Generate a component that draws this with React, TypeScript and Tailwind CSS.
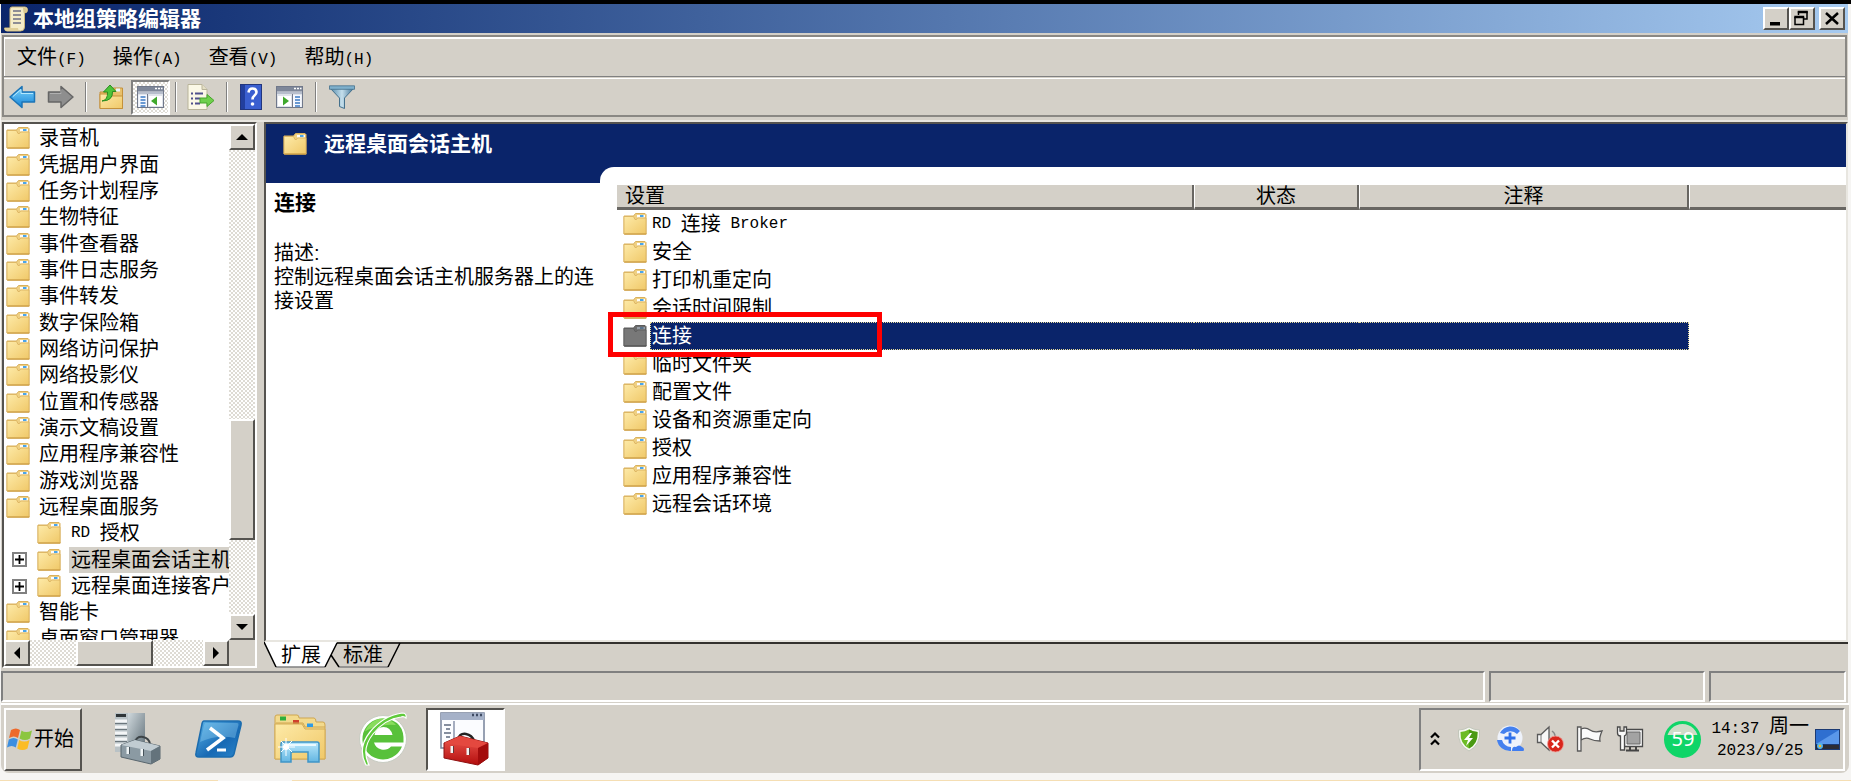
import React from "react";

interface ITreeItem {
  label: string;
  child?: boolean;
  expandable?: boolean;
  selected?: boolean;
}

const treeItems: ITreeItem[] = [
  { label: "录音机" },
  { label: "凭据用户界面" },
  { label: "任务计划程序" },
  { label: "生物特征" },
  { label: "事件查看器" },
  { label: "事件日志服务" },
  { label: "事件转发" },
  { label: "数字保险箱" },
  { label: "网络访问保护" },
  { label: "网络投影仪" },
  { label: "位置和传感器" },
  { label: "演示文稿设置" },
  { label: "应用程序兼容性" },
  { label: "游戏浏览器" },
  { label: "远程桌面服务" },
  { label: "RD 授权", child: true },
  { label: "远程桌面会话主机", child: true, expandable: true, selected: true },
  { label: "远程桌面连接客户", child: true, expandable: true },
  { label: "智能卡" },
  { label: "桌面窗口管理器" },
];

const settings = [
  "RD 连接 Broker",
  "安全",
  "打印机重定向",
  "会话时间限制",
  "连接",
  "临时文件夹",
  "配置文件",
  "设备和资源重定向",
  "授权",
  "应用程序兼容性",
  "远程会话环境",
];

const raised =
  "border-2 border-t-white border-l-white border-r-[#55534f] border-b-[#55534f] bg-[#d4d0c8]";
const dither =
  "bg-[conic-gradient(#dedbd4_25%,#fff_0_50%,#dedbd4_0_75%,#fff_0)] bg-[length:4px_4px]";

// Latin runs are set in a half-width face next to the full-width characters
function MixedText({ children }: { children: string }) {
  return (
    <>
      {children.split(/([\x20-\x7e]+)/).map((part, i) =>
        i % 2 ? (
          <span
            key={i}
            className="font-['Liberation_Mono','Noto_Sans_CJK_SC',monospace] text-[16px] whitespace-pre"
          >
            {part}
          </span>
        ) : (
          part
        )
      )}
    </>
  );
}

function FolderIcon({ dark = false }: { dark?: boolean }) {
  const front = dark ? "#787878" : "url(#folderFront)";
  const edge = dark ? "#5c5c5c" : "#d9b05c";
  return (
    <svg width="24" height="22" viewBox="0 0 24 22" className="shrink-0" aria-hidden="true">
      <path d="M1 3h9.500l2-2.500h9.500l1 1V21H1z" fill={dark ? "#6c6c6c" : "#efd083"} stroke={edge} />
      <path d="M14 2h8v2.500h-8z" fill={dark ? "#98a0a8" : "#fdfdfd"} />
      <path d="M17 2h3.500v2H17z" fill={dark ? "#59738c" : "#4aa5ea"} />
      <path d="M1 3.500h9.500l1.500 3h1.500l1-1.500h8.500V21H1z" fill={front} stroke={edge} strokeWidth=".8" />
      <path d="M1.500 21h22" stroke={dark ? "#505050" : "#c9993f"} />
    </svg>
  );
}

function Defs() {
  return (
    <svg width="0" height="0" className="absolute" aria-hidden="true">
      <defs>
        <linearGradient id="folderFront" x1="0" y1="0" x2="1" y2="1">
          <stop offset="0" stopColor="#fdeaa8" />
          <stop offset="1" stopColor="#f0c868" />
        </linearGradient>
        <linearGradient id="blueArrow" x1="0" y1="0" x2="0" y2="1">
          <stop offset="0" stopColor="#7fd6fb" />
          <stop offset="1" stopColor="#1583d8" />
        </linearGradient>
        <linearGradient id="steel" x1="0" y1="0" x2="1" y2="1">
          <stop offset="0" stopColor="#cfd8dc" />
          <stop offset="1" stopColor="#5f6e77" />
        </linearGradient>
        <linearGradient id="psBlue" x1="0" y1="0" x2="1" y2="1">
          <stop offset="0" stopColor="#5cb4e8" />
          <stop offset=".6" stopColor="#1769b4" />
          <stop offset="1" stopColor="#2b86cc" />
        </linearGradient>
        <linearGradient id="funnel" x1="0" y1="0" x2="1" y2="0">
          <stop offset="0" stopColor="#4f86a8" />
          <stop offset=".5" stopColor="#c5dfec" />
          <stop offset="1" stopColor="#3d7195" />
        </linearGradient>
        <linearGradient id="glass" x1="0" y1="0" x2="0" y2="1">
          <stop offset="0" stopColor="#b9e8fb" />
          <stop offset="1" stopColor="#63b6e2" />
        </linearGradient>
        <linearGradient id="redBox" x1="0" y1="0" x2="0" y2="1">
          <stop offset="0" stopColor="#ee5a50" />
          <stop offset="1" stopColor="#b30d0d" />
        </linearGradient>
      </defs>
    </svg>
  );
}

function ScrollIcon() {
  return (
    <svg width="24" height="26" viewBox="0 0 24 26" aria-hidden="true">
      <path d="M6 3q0-2 2-2h13q2.500 0 2.500 3t-3 3v14q0 4-4 4H3q-2.500 0-2.500-3H6z" fill="#f4ecc8" stroke="#cbb67a" />
      <path d="M19 1.500q3.500 0 4 2.500t-3.500 3z" fill="#d8c78f" />
      <path d="M1 22h13q0 3 3 3H3q-2 0-2-3z" fill="#e0cf98" />
      <path d="M9 5h8M9 9h8M9 13h8M9 17h8" stroke="#8d8d95" strokeWidth="1.800" />
    </svg>
  );
}

function ArrowIcon({ left = false }: { left?: boolean }) {
  return (
    <svg width="27" height="24" viewBox="0 0 27 24" aria-hidden="true">
      <path
        d={left ? "M1 12 13 1.500V7h12.500v10H13v5.500z" : "M26 12 14 1.500V7H1.500v10H14v5.500z"}
        fill={left ? "url(#blueArrow)" : "#8e8e8e"}
        stroke={left ? "#1c74b6" : "#666"}
        strokeWidth="1.500"
        strokeLinejoin="round"
      />
      <path
        d={left ? "M4 11.500 12 4.500V8.500h12" : "M14 4.500v4H3"}
        fill="none"
        stroke={left ? "#b5e9ff" : "#b0b0b0"}
      />
    </svg>
  );
}

function FolderUpIcon() {
  return (
    <svg width="25" height="26" viewBox="0 0 25 26" aria-hidden="true">
      <path d="M1 8h10l3-4h9.500v20.500H1z" fill="#e8c06a" stroke="#c4913b" />
      <path d="M1 10h9l3 2h10.500v12.500H1z" fill="url(#folderFront)" stroke="#c4913b" />
      <path d="M17 4.500h4v3h-4z" fill="#e8f4fc" />
      <path d="M3 17q6-1 5.500-9H4.500L11 1l6 6.500h-3.500Q14 17 3 17z" fill="#4dc43a" stroke="#2b8c20" />
    </svg>
  );
}

function PanelIcon({ right = false }: { right?: boolean }) {
  return (
    <svg width="27" height="22" viewBox="0 0 27 22" aria-hidden="true">
      <rect x=".5" y=".5" width="26" height="21" fill="#dfe3ea" stroke="#70788a" />
      <path d="M1 1h25v4.500H1z" fill="#7e8799" />
      <path d="M18 2.500h2M21 2.500h2M24 2.500h1.500" stroke="#fff" strokeWidth="1.500" />
      <path d="M1 7h25" stroke="#aab2c2" strokeWidth="1.500" />
      <path d={right ? "M2 10h13v10H2z" : "M12 10h13v10H12z"} fill="#fff" />
      <path d={right ? "M17 9h8.500v12H17z" : "M1.500 9H10v12H1.500z"} fill="#f5f8ff" />
      <path
        d={right ? "M19 11h5M19 14h5M19 17h5M19 20h5" : "M3.500 11h5M3.500 14h5M3.500 17h5M3.500 20h5"}
        stroke="#3b7ac4"
        strokeWidth="1.600"
      />
      <path d={right ? "M16.500 8v13" : "M10.500 8v13"} stroke="#70788a" />
      <path d={right ? "M7 10.500v9l6-4.500z" : "M20 10.500v9L14 15z"} fill="#3fa82c" />
    </svg>
  );
}

function ExportIcon() {
  return (
    <svg width="28" height="26" viewBox="0 0 28 26" aria-hidden="true">
      <path d="M1 .5h14l5 5v20H1z" fill="#fbf8e6" stroke="#b9b49a" />
      <path d="M15 .5v5h5" fill="#e4dfc4" stroke="#b9b49a" />
      <path d="M4 9.500h2M8 9.500h8M4 14.500h2M8 14.500h5M4 19.500h2M8 19.500h5" stroke="#50508c" strokeWidth="1.800" />
      <path d="M13 14h7v-3.500l7 6-7 6V19h-7z" fill="#6fd04c" stroke="#48a52c" />
    </svg>
  );
}

function HelpIcon() {
  return (
    <svg width="22" height="26" viewBox="0 0 22 26" aria-hidden="true">
      <rect x=".5" y=".5" width="21" height="25" fill="#3a5fd0" stroke="#22367e" />
      <path d="M1 1h4v24H1z" fill="#223f9e" />
      <path
        d="M8.500 8.500q.5-4 4-4t4 3.500q0 2-2 3.500t-2 4"
        fill="none"
        stroke="#fff"
        strokeWidth="2.600"
      />
      <circle cx="12.500" cy="20" r="1.800" fill="#fff" />
    </svg>
  );
}

function FilterIcon() {
  return (
    <svg width="26" height="24" viewBox="0 0 26 24" aria-hidden="true">
      <path d="M1 3 10.500 13v8.500l5 2V13L25 3z" fill="url(#funnel)" stroke="#44708c" />
      <path d="M.5.800h25v3.500H.5z" fill="#7fb0cc" stroke="#44708c" strokeWidth=".8" />
    </svg>
  );
}

function ScrollButton({ label, points }: { label: string; points: string }) {
  return (
    <button aria-label={label} className={`flex size-[26px] shrink-0 items-center justify-center ${raised}`}>
      <svg width="12" height="12" viewBox="0 0 12 12" aria-hidden="true">
        <polygon points={points} fill="#000" />
      </svg>
    </button>
  );
}

function TitleBar() {
  return (
    <div className="flex h-[29px] shrink-0 items-center bg-linear-to-r from-[#0a246a] to-[#a6caf0] pr-[3px] pl-[3px]">
      <ScrollIcon />
      <h1 className="ml-[5px] flex-1 text-[21px] leading-none font-bold text-white">本地组策略编辑器</h1>
      <button aria-label="最小化" className={`h-[23px] w-[26px] ${raised}`}>
        <svg width="22" height="19" viewBox="0 0 22 19" aria-hidden="true">
          <path d="M5 13h10v3.500H5z" />
        </svg>
      </button>
      <button aria-label="还原" className={`h-[23px] w-[26px] ${raised}`}>
        <svg width="22" height="19" viewBox="0 0 22 19" fill="none" stroke="#000" aria-hidden="true">
          <path d="M7.500 6V3h8.500v7h-3" strokeWidth="1.500" />
          <path d="M6.800 3h9.900M3.300 8h9.900" strokeWidth="2.600" />
          <path d="M4 8v7.500h8.500V8" strokeWidth="1.500" />
        </svg>
      </button>
      <button aria-label="关闭" className={`ml-1 h-[23px] w-[26px] ${raised}`}>
        <svg width="22" height="19" viewBox="0 0 22 19" aria-hidden="true">
          <path d="m5 4 12 11M17 4 5 15" stroke="#000" strokeWidth="2.500" />
        </svg>
      </button>
    </div>
  );
}

function Separator() {
  return <span className="h-[30px] w-[2px] border-r border-l border-r-white border-l-[#808080]" />;
}

function MenuAndToolbar() {
  return (
    <div className="mt-[2px] mr-[1px] ml-[1px] shrink-0 border-2 border-[#8a8884]">
      <nav className="flex h-[39px] items-center gap-[27px] border-t-2 border-l border-white pl-[12px]">
        {["文件(F)", "操作(A)", "查看(V)", "帮助(H)"].map((m) => (
          <button key={m} className="leading-none">
            <MixedText>{m}</MixedText>
          </button>
        ))}
      </nav>
      <div className="h-[3px] border-t border-b border-t-[#808080] border-b-white" />
      <div className="flex h-[36px] items-center pl-[5px]">
        <button aria-label="后退">
          <ArrowIcon left />
        </button>
        <button aria-label="前进" className="mr-[11px] ml-[11px]">
          <ArrowIcon />
        </button>
        <Separator />
        <button aria-label="向上一级" className="mr-[7px] ml-[12px]">
          <FolderUpIcon />
        </button>
        <button
          aria-label="显示控制台树"
          aria-pressed="true"
          className={`mr-[5px] flex h-[35px] w-[39px] items-center justify-center border-2 border-t-[#808080] border-r-white border-b-white border-l-[#808080] ${dither}`}
        >
          <PanelIcon />
        </button>
        <Separator />
        <button aria-label="导出列表" className="mr-[11px] ml-[10px]">
          <ExportIcon />
        </button>
        <Separator />
        <button aria-label="帮助" className="ml-[12px]">
          <HelpIcon />
        </button>
        <button aria-label="显示操作窗格" className="mr-[12px] ml-[14px]">
          <PanelIcon right />
        </button>
        <Separator />
        <button aria-label="筛选" className="ml-[12px]">
          <FilterIcon />
        </button>
      </div>
    </div>
  );
}

function TreePane() {
  return (
    <aside className="flex w-[255px] shrink-0 flex-col border-2 border-t-[#55534f] border-r-white border-b-white border-l-[#55534f]">
      <div className="flex min-h-0 flex-1">
        <div className="min-w-0 flex-1 overflow-hidden bg-white pt-[1px]">
          <ul className="flex h-[527px] flex-col">
            {treeItems.map((item) => (
              <li
                key={item.label}
                className={`flex min-h-0 flex-1 items-center whitespace-nowrap ${item.child ? "pl-[8px]" : "pl-[2px]"}`}
              >
                {item.child &&
                  (item.expandable ? (
                    <button
                      aria-label="展开"
                      className="mr-[10px] flex size-[15px] shrink-0 items-center justify-center border-2 border-[#808080] bg-white"
                    >
                      <svg width="9" height="9" viewBox="0 0 9 9" aria-hidden="true">
                        <path d="M0 4.500h9M4.500 0v9" stroke="#000" strokeWidth="1.800" />
                      </svg>
                    </button>
                  ) : (
                    <span className="mr-[10px] w-[15px] shrink-0" />
                  ))}
                <FolderIcon />
                <span
                  className={`flex h-full items-center ${
                    item.child ? "ml-[8px] flex-1 pl-[2px]" : "ml-[9px]"
                  } ${item.selected ? "bg-[#d4d0c8]" : ""}`}
                >
                  <MixedText>{item.label}</MixedText>
                </span>
              </li>
            ))}
          </ul>
        </div>
        <div className={`flex w-[26px] shrink-0 flex-col ${dither}`}>
          <ScrollButton label="向上滚动" points="0,9 12,9 6,3" />
          <div className="flex-[270]" />
          <div className={`flex-[117] ${raised}`} />
          <div className="flex-[74]" />
          <ScrollButton label="向下滚动" points="0,3 12,3 6,9" />
        </div>
      </div>
      <div className="flex h-[26px] shrink-0 pr-[26px]">
        <div className={`flex flex-1 ${dither}`}>
          <ScrollButton label="向左滚动" points="9,0 9,12 3,6" />
          <div className="flex-[46]" />
          <div className={`flex-[74] ${raised}`} />
          <div className="flex-[50]" />
          <ScrollButton label="向右滚动" points="3,0 3,12 9,6" />
        </div>
      </div>
    </aside>
  );
}

function SettingsTable() {
  const head =
    "h-[25px] border-b-[3px] border-[#686662] bg-[#d4d0c8] p-0 text-center leading-none font-normal";
  const split = "border-r-2 border-r-[#686662]";
  return (
    <table className="w-full table-fixed border-separate border-spacing-0">
      <colgroup>
        <col className="w-[577px]" />
        <col className="w-[165px]" />
        <col className="w-[330px]" />
        <col />
      </colgroup>
      <thead>
        <tr>
          <th className={`${head} ${split} pl-2 text-left`}>设置</th>
          <th className={`${head} ${split} border-l border-l-white`}>状态</th>
          <th className={`${head} ${split} border-l border-l-white`}>注释</th>
          <th className={`${head} border-l border-l-white`} aria-label="其他" />
        </tr>
      </thead>
      <tbody>
        {settings.map((name) => {
          const selected = name === "连接";
          const mark = selected
            ? "border-y border-dotted border-[#e8dc9a] bg-[#0a246a] text-white"
            : "";
          return (
            <tr key={name} className="h-7">
              <td className="relative p-0">
                <div className="flex h-7 items-center pl-[6px]">
                  <FolderIcon dark={selected} />
                  <span
                    className={`ml-[3px] flex h-full flex-1 items-center ${mark} ${selected ? "border-l pl-[1px]" : "pl-[2px]"}`}
                  >
                    <MixedText>{name}</MixedText>
                  </span>
                </div>
                {selected && (
                  <div className="absolute -top-[10px] -left-[9px] z-10 h-[45px] w-[274px] border-[5px] border-[#ff0000]" />
                )}
              </td>
              <td className={`p-0 ${mark}`} />
              <td className={`p-0 ${mark} ${selected ? "border-r" : ""}`} />
              <td className="p-0" />
            </tr>
          );
        })}
      </tbody>
    </table>
  );
}

function DetailPane() {
  return (
    <main className="flex min-w-0 flex-1 flex-col">
      <div className="flex min-h-0 flex-1 flex-col border-2 border-t-[#55534f] border-r-[#e8e6e0] border-b-[#e8e6e0] border-l-[#55534f] bg-white">
        <div className="flex h-[59px] shrink-0 items-start bg-[#0a246a] pt-[9px] pl-[17px]">
          <div className="flex items-center gap-[17px]">
            <FolderIcon />
            <h2 className="text-[21px] leading-[22px] font-bold text-white">远程桌面会话主机</h2>
          </div>
        </div>
        <div className="flex min-h-0 flex-1">
          <section className="w-[334px] shrink-0 pt-[8px] pl-[8px]">
            <h3 className="text-[21px] leading-6 font-bold">连接</h3>
            <p className="mt-[26px] leading-6">描述:</p>
            <p className="leading-6">控制远程桌面会话主机服务器上的连接设置</p>
          </section>
          <section className="-mt-4 min-w-0 flex-1 rounded-tl-[14px] bg-white pt-[18px] pl-[17px]">
            <SettingsTable />
          </section>
        </div>
      </div>
      <div className="relative flex h-[26px] shrink-0 items-center">
        <div className="absolute top-0 right-0 left-[72px] h-[2px] bg-[#33312e]" />
        <svg width="140" height="26" viewBox="0 0 140 26" className="absolute top-0 left-0" aria-hidden="true">
          <path d="M0 0h73L61 25H12z" fill="#fff" />
          <path d="M12 25h49M75 25h49" stroke="#808080" strokeWidth="1.500" />
          <path d="M0 0 12 25M61 25 73 1M67 13l8 12M124 25 136 1" fill="none" stroke="#000" strokeWidth="1.500" />
        </svg>
        <button className="relative ml-[17px] leading-none">扩展</button>
        <button className="relative ml-[22px] leading-none">标准</button>
      </div>
    </main>
  );
}

function StatusBar() {
  const cell = "border-2 border-t-[#808080] border-l-[#808080] border-r-white border-b-white";
  return (
    <footer className="mt-[3px] mb-[1px] flex h-[31px] shrink-0 gap-1 pr-[2px]">
      <div className={`flex-1 ${cell}`} />
      <div className={`w-[216px] ${cell}`} />
      <div className={`w-[137px] ${cell}`} />
    </footer>
  );
}

function WindowsFlag() {
  return (
    <svg width="26" height="24" viewBox="0 0 26 24" aria-hidden="true">
      <path d="M4 3q5-3 9 0l-2 8q-4-3-9 0z" fill="#ee6a2c" />
      <path d="M14.500 3.500q4 3 10.500 0l-2 8q-5 3-10.500 0z" fill="#8cc63f" />
      <path d="M1.800 12.500q5-3 9 0l-2 8q-4-3-8.800 0z" fill="#3d8fe0" />
      <path d="M12.200 13q5 3 10.300 0l-2 8.500q-5 3-10.300 0z" fill="#fbbc25" />
    </svg>
  );
}

function ServerManagerIcon() {
  return (
    <svg width="48" height="54" viewBox="0 0 48 54" aria-hidden="true">
      <path d="M1 1h13v39H1z" fill="#b9c2c6" />
      <path d="M14 1h17v39H14z" fill="url(#steel)" />
      <path d="M2 3.500h10" stroke="#2f3538" strokeWidth="3" />
      <path d="M1 9h12M1 15h12M1 21h12M1 27h12M1 33h12" stroke="#f4f6f7" strokeWidth="3" />
      <path d="M1 11.500h12M1 17.500h12M1 23.500h12M1 29.500h12" stroke="#6c777d" />
      <path d="M21 30q2-6 8-5 6 1 7 7" fill="none" stroke="#3d4447" strokeWidth="2" />
      <path d="m7 33 14-5 25 6v13l-9 5L7 45z" fill="#8b9aa3" stroke="#59666e" />
      <path d="m7 33 14-5 25 6-9 5z" fill="#c1ccd2" />
      <path d="m37 39 9-5v13l-9 5z" fill="#64737c" />
      <path d="M14 35v7M28 37v7" stroke="#eef3f5" strokeWidth="3" />
      <path d="M15.500 35v7M29.500 37v7" stroke="#46535b" />
    </svg>
  );
}

function PowerShellIcon() {
  return (
    <svg width="50" height="40" viewBox="0 0 50 40" aria-hidden="true">
      <path d="M11 2h34q4 0 3 4l-7 29q-1 3-4 3H6q-4 0-3-4L9 5q.5-3 2-3z" fill="url(#psBlue)" stroke="#1b6cae" strokeWidth="1.500" />
      <path d="M12 4h32q2 0 1.500 2L42 19Q24 15 7 23L11 6z" fill="#8fd0f3" opacity=".4" />
      <path d="m17 9 13 10-16 12" fill="none" stroke="#fff" strokeWidth="3.500" />
      <path d="M24 31h9" stroke="#fff" strokeWidth="3" />
    </svg>
  );
}

function ExplorerIcon() {
  return (
    <svg width="54" height="50" viewBox="0 0 54 50" aria-hidden="true">
      <path d="M2 3q0-2 2-2h20q2 0 2 3h15q2 0 2 4h7q2 0 2 3v34H2z" fill="#f3da8d" stroke="#cfa650" />
      <path d="M7 2.500h6v4H7z" fill="#2fae3c" />
      <path d="M20 6h6v4h-6z" fill="#d1402d" />
      <path d="M3 9h27l2 4h20" fill="none" stroke="#cfa650" />
      <path d="M34 9.500h6v3.500h-6z" fill="#2f9be6" />
      <path d="M2 10h27l3 5h20v30H2z" fill="url(#folderFront)" stroke="#d3ab55" />
      <path d="M8 30q0-2 2-2h34q2 0 2 2v18H35V38H18v10H8z" fill="url(#glass)" stroke="#3f95c7" strokeWidth="1.500" />
      <path d="M11 31h32" stroke="#e9f9ff" strokeWidth="2" />
      <path d="M13 24v18M5 33h17M8 27l11 11M19 27 8 38" stroke="#fff" strokeWidth="1" />
      <circle cx="13" cy="33" r="3" fill="#fff" />
    </svg>
  );
}

function BrowserIcon() {
  return (
    <svg width="50" height="54" viewBox="0 0 50 54" aria-hidden="true">
      <circle cx="25" cy="27" r="23.500" fill="#fff" stroke="#c8ccc2" />
      <path
        d="M25 6.500a20.500 20.500 0 1 0 19 28H33A10 10 0 0 1 16 30.500h29.500Q47 8 25 6.500zM16.500 23q2-8 9-8t9 8z"
        fill="#58c13a"
      />
      <path d="M25 6.500a20 20 0 0 0-18 13q14-8 31-6.500Q33 7 25 6.500z" fill="#88dc5c" />
      <path d="M8 53Q-1 36 12 20T44 1q5 0 4 5-2-2-5-1Q27 7 15 22T11 53z" fill="#5fca3b" stroke="#fff" strokeWidth="1.200" />
    </svg>
  );
}

function ToolboxIcon() {
  return (
    <svg width="52" height="54" viewBox="0 0 52 54" aria-hidden="true">
      <path d="M1 1h43v35H1z" fill="#fbfcff" stroke="#77829a" strokeWidth="1.500" />
      <path d="M1 1h43v7H1z" fill="#a5b1c8" />
      <path d="M32 3h2M36 3h2M40 3h2" stroke="#3f4b63" strokeWidth="2.500" />
      <path d="M14 9v26" stroke="#8893ab" strokeWidth="1.500" />
      <path d="M4 13h7M6 17h4M4 21h7M6 25h4" stroke="#5f6a80" strokeWidth="1.500" />
      <path d="M18 27q2-6 8-5t8 7" fill="none" stroke="#222" strokeWidth="2.500" />
      <path d="m4 31 16-7 28 7v15l-10 7L4 46z" fill="url(#redBox)" stroke="#8f1010" />
      <path d="m4 31 16-7 28 7-10 5z" fill="#e4483f" />
      <path d="m38 36 10-5v15l-10 7z" fill="#a30c0c" />
      <path d="M12 34v7M28 36v7" stroke="#f2f2f2" strokeWidth="3" />
      <path d="M13.500 34v7M29.500 36v7" stroke="#5a3a3a" />
    </svg>
  );
}

function TrayIcons() {
  return (
    <>
      <button aria-label="显示隐藏的图标">
        <svg width="10" height="16" viewBox="0 0 10 16" fill="none" stroke="#000" strokeWidth="2.200" aria-hidden="true">
          <path d="m1 6.500 4-4 4 4M1 13.500l4-4 4 4" />
        </svg>
      </button>
      <button aria-label="安全防护" className="ml-[17px]">
        <svg width="24" height="26" viewBox="0 0 24 26" aria-hidden="true">
          <path d="M12 1q5 3 10.500 3Q24 19 12 25 0 19 1.500 4 7 4 12 1z" fill="#f4f6f0" stroke="#c2c6ba" />
          <path d="M12 3.500q4 2 8.500 2.500Q21 18 12 22.500 3 18 3.500 6 8 5.500 12 3.500z" fill="#6cbb26" />
          <path d="M12 3.500v19q9-4.500 8.500-16.500Q16 5.500 12 3.500z" fill="#4a9a14" />
          <path d="m13 7-6 7h4l-2 6 7-8h-4l3-5z" fill="#fff" />
        </svg>
      </button>
      <button aria-label="同步助手" className="ml-[15px]">
        <svg width="28" height="28" viewBox="0 0 28 28" aria-hidden="true">
          <circle cx="14" cy="13" r="12.500" fill="#eef2fb" />
          <path d="M4 8A12 12 0 0 1 24 6l-3 3A9 9 0 0 0 8 9zM1 15h5a9 9 0 0 0 9 7v4A13 13 0 0 1 1 15z" fill="#4480ee" />
          <path d="M14 7.500v11M8.500 13h11" stroke="#2f70ea" strokeWidth="2.800" />
          <path d="M16 26q0-5 4-4 3-3 6 0 3 1 1.500 4z" fill="#3f7cf0" />
        </svg>
      </button>
      <button aria-label="音量" className="ml-[12px]">
        <svg width="28" height="28" viewBox="0 0 28 28" aria-hidden="true">
          <path d="M1.500 9.500H5l8-7.500v23l-8-7.500H1.500z" fill="#f7f7f7" stroke="#5a5a5a" strokeWidth="1.300" />
          <path d="M5 9.500v8" stroke="#777" />
          <path d="M16 6q3 2 3 5" fill="none" stroke="#888" strokeWidth="1.500" />
          <circle cx="19.500" cy="19" r="8" fill="#d9261c" stroke="#f0a19c" strokeWidth=".8" />
          <path d="m16 15.500 7 7m0-7-7 7" stroke="#fff" strokeWidth="2.400" />
        </svg>
      </button>
      <button aria-label="操作中心" className="ml-[12px]">
        <svg width="28" height="28" viewBox="0 0 28 28" aria-hidden="true">
          <path d="M5 4q5-2 9 1t12 1q-3 7-2 10-6 0-10-2t-9 1z" fill="#fafafa" stroke="#5a5a5a" strokeWidth="1.300" />
          <path d="M1.500 2h3.500v24H1.500z" fill="#fafafa" stroke="#5a5a5a" strokeWidth="1.300" />
        </svg>
      </button>
      <button aria-label="网络" className="ml-[12px]">
        <svg width="28" height="28" viewBox="0 0 28 28" aria-hidden="true">
          <path d="M8.500 4.500h18v17h-18z" fill="#fafafa" stroke="#4a4a4a" strokeWidth="1.300" />
          <path d="M11 7h13v12H11z" fill="#a3a3a3" stroke="#666" />
          <path d="M10 25.500h13M14 22v3.500M20 22v3.500" stroke="#444" strokeWidth="2" />
          <path d="M1.500 2v6q0 3 3 3v14h4V11q2-.5 2-3V2H8v4H4V2z" fill="#fafafa" stroke="#4a4a4a" strokeWidth="1.300" />
        </svg>
      </button>
      <button
        aria-label="体检得分"
        className="ml-[20px] flex size-[37px] items-center justify-center rounded-full border-[3px] border-[#0fd568] bg-linear-to-b from-[#cfdcc8] from-35% to-[#0fd568] to-35% font-['Noto_Sans',sans-serif] text-[20px] leading-none text-white"
      >
        59
      </button>
    </>
  );
}

function Taskbar() {
  return (
    <div className="flex h-[70px] shrink-0 items-center rounded-b-lg border-t-2 border-white bg-[#d4d0c8] pr-[4px] pl-[3px]">
      <button className={`flex h-[63px] w-[78px] items-center gap-[1px] pl-[1px] leading-none whitespace-nowrap ${raised}`}>
        <span className="shrink-0">
          <WindowsFlag />
        </span>
        开始
      </button>
      <button aria-label="服务器管理器" className="ml-[32px]">
        <ServerManagerIcon />
      </button>
      <button aria-label="PowerShell" className="ml-[31px]">
        <PowerShellIcon />
      </button>
      <button aria-label="资源管理器" className="ml-[30px]">
        <ExplorerIcon />
      </button>
      <button aria-label="浏览器" className="ml-[31px]">
        <BrowserIcon />
      </button>
      <button
        aria-label="本地组策略编辑器"
        className="ml-[18px] flex h-[63px] w-[79px] items-center justify-center border-2 border-t-[#55534f] border-r-white border-b-white border-l-[#55534f] bg-white"
      >
        <ToolboxIcon />
      </button>
      <div className="ml-auto flex h-[63px] items-center border-2 border-t-[#808080] border-r-white border-b-white border-l-[#808080] pr-[3px] pl-[9px]">
        <TrayIcons />
        <div className="ml-[10px] text-center leading-[19px] whitespace-nowrap">
          <div>
            <MixedText>14:37 周一</MixedText>
          </div>
          <div>
            <MixedText>2023/9/25</MixedText>
          </div>
        </div>
        <button aria-label="显示桌面" className="ml-[6px]">
          <svg width="25" height="21" viewBox="0 0 25 21" aria-hidden="true">
            <path d="M0 0h25v21H0z" fill="#1c3a72" />
            <path d="M1 1h23v14H1z" fill="#2f6fd0" />
            <path d="M1 15 24 1v14z" fill="#5a97ea" />
            <path d="M1 16h23v4H1z" fill="#2c2c34" />
            <circle cx="5" cy="17" r="3" fill="#52b5ee" />
            <circle cx="5" cy="17" r="1.300" fill="#fbbc25" />
          </svg>
        </button>
      </div>
    </div>
  );
}

export default function App() {
  return (
    <div className="flex h-screen min-h-[760px] flex-col bg-[#f6f5f3] font-['Liberation_Sans','Noto_Sans_CJK_SC',sans-serif] text-[20px] text-black">
      <Defs />
      <div className="h-1 shrink-0 bg-black" />
      <div className="mr-[3px] ml-[1px] flex min-h-0 flex-1 flex-col bg-[#d4d0c8]">
        <TitleBar />
        <MenuAndToolbar />
        <div className="mt-[3px] flex min-h-0 flex-1 gap-[7px] border-t-2 border-[#e8e6e0] pl-[1px]">
          <TreePane />
          <DetailPane />
        </div>
        <StatusBar />
      </div>
      <div className="mr-[2px] ml-[1px] shrink-0">
        <Taskbar />
      </div>
      <div className="mt-[7px] flex h-[1px] shrink-0 gap-[74px]">
        <div className="w-[218px] bg-[#f5deb3]" />
        <div className="flex-1 bg-[#f5deb3]" />
      </div>
    </div>
  );
}
